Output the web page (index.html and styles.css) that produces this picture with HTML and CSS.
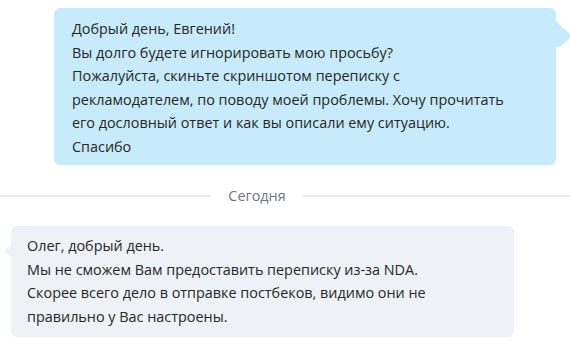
FILE: index.html
```html
<!DOCTYPE html>
<html lang="ru">
<head>
    <meta charset="UTF-8">
    <title>Чат</title>
    <link rel="stylesheet" href="styles.css">
</head>
<body>
    <div class="chat">
        <div class="row row-out">
            <div class="bubble bubble-out">
                Добрый день, Евгений!<br>
                Вы долго будете игнорировать мою просьбу?<br>
                Пожалуйста, скиньте скриншотом переписку с<br>
                рекламодателем, по поводу моей проблемы. Хочу прочитать<br>
                его дословный ответ и как вы описали ему ситуацию.<br>
                Спасибо
                <svg class="tail tail-out" width="18" height="32" viewBox="0 0 18 32">
                    <path d="M0 0 C1 4 3 8 8 12 C12 15 16 18 16 21 C16 24 12 27 8 30 L6 32 L0 32 Z" />
                </svg>
            </div>
        </div>

        <div class="divider">
            <span class="line"></span>
            <span class="day">Сегодня</span>
            <span class="line"></span>
        </div>

        <div class="row row-in">
            <div class="bubble bubble-in">
                Олег, добрый день.<br>
                Мы не сможем Вам предоставить переписку из-за NDA.<br>
                Скорее всего дело в отправке постбеков, видимо они не<br>
                правильно у Вас настроены.
                <svg class="tail tail-in" width="10" height="24" viewBox="0 0 10 24">
                    <path d="M10 0 C9 4 7 7 4 9 C1 11 0 12 0 13 C0 14 1 15 4 17 C7 19 9 21 10 24 Z" />
                </svg>
            </div>
        </div>
    </div>
</body>
</html>
```

FILE: styles.css
```css
body {
    margin: 0;
    background-color: #ffffff;
    font-family: "Open Sans", "Noto Sans", sans-serif;
    font-size: 14.4px;
    color: #262626;
}
.chat {
    display: flex;
    flex-direction: column;
    padding-top: 8px;
}
.row {
    display: flex;
}
.row-out {
    justify-content: flex-end;
    padding-right: 14px;
}
.row-in {
    justify-content: flex-start;
    padding-left: 11px;
    margin-top: 21px;
}
.bubble {
    position: relative;
    box-sizing: border-box;
    border-radius: 6px;
    line-height: 23.5px;
}
.bubble-out {
    width: 502px;
    height: 157px;
    padding: 9px 18px;
    background-color: #c7ebfb;
}
.bubble-in {
    width: 503px;
    height: 111px;
    padding: 8px 16px;
    background-color: #eef2f7;
}
.tail {
    position: absolute;
}
.tail-out {
    right: -16px;
    top: 7px;
    fill: #c7ebfb;
}
.tail-in {
    left: -6px;
    top: 12px;
    fill: #eef2f7;
}
.divider {
    display: grid;
    grid-template-columns: 211px 92px 1fr;
    align-items: center;
    margin-top: 21px;
}
.line {
    height: 2px;
    background-color: #e8edf1;
}
.day {
    text-align: center;
    font-size: 14.4px;
    color: #6b7786;
}
```
